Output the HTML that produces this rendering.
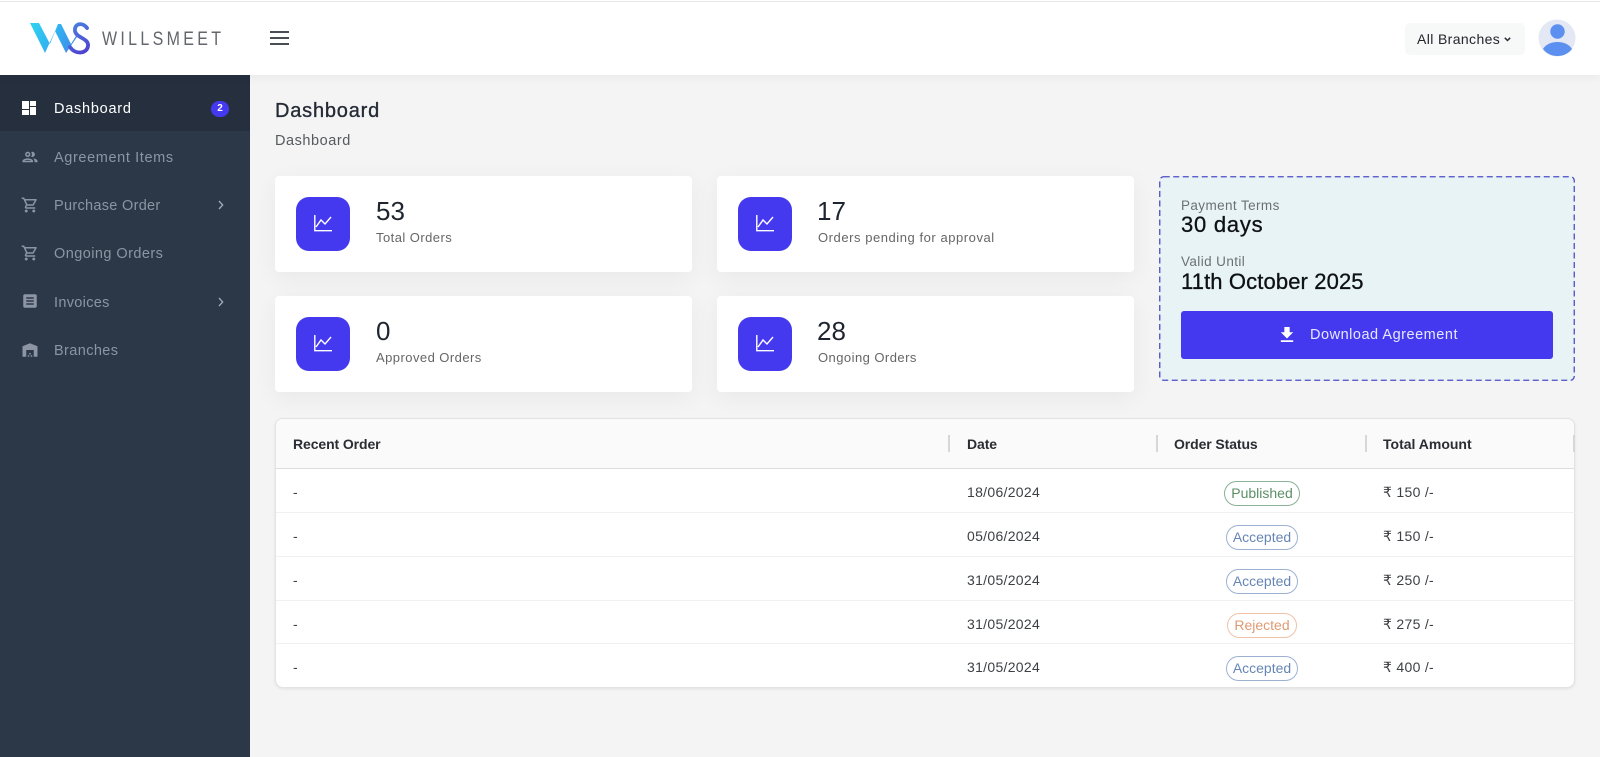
<!DOCTYPE html>
<html lang="en">
<head>
<meta charset="utf-8">
<title>Dashboard</title>
<style>
html,body{margin:0;padding:0;width:1600px;height:757px;overflow:hidden;background:#f4f4f4;font-family:"Liberation Sans",sans-serif}
.a{position:absolute}
.t{position:absolute;white-space:nowrap;height:24px;line-height:24px}
.card{position:absolute;width:417px;height:96px;background:#fff;border-radius:4px;box-shadow:0 6px 24px rgba(0,0,0,.05)}
.ico{position:absolute;left:21px;top:21px;width:54px;height:54px;border-radius:13px;background:#4539f0}
.ico svg{position:absolute;left:18px;top:18px}
.num{font-size:26px;color:#1f2530;left:101px;top:23px}
.lbl{font-size:13px;letter-spacing:.45px;color:#666;left:101px;top:50px}
.nav{font-size:14.5px;color:#8b95a3;left:54px}
.nv{position:absolute;left:21px;width:18px;height:18px;fill:#8b95a3}
.th{font-size:14px;font-weight:bold;color:#2a2d33;letter-spacing:-.1px}
.td{font-size:14px;color:#3c3f44;letter-spacing:.3px}
.sep{position:absolute;width:2px;height:17px;top:435px;background:#d5d7d9}
.row{position:absolute;left:276px;width:1299px;height:1px;background:#f0f0f0}
.pill{position:absolute;height:23px;line-height:23px;border:1px solid;border-radius:13px;text-align:center;font-size:14px;box-sizing:content-box;background:#fff}
</style>
</head>
<body>
<div class="a" style="left:0;top:0;width:1600px;height:75px;background:#fff;box-shadow:0 2px 10px rgba(0,0,0,.05);z-index:2"></div>
<div class="a" style="left:0;top:1px;width:1600px;height:1px;background:#e8e8e8;z-index:3"></div>

<div style="position:absolute;left:0;top:0;z-index:4">
<svg class="a" style="left:28px;top:20px" width="66" height="38" viewBox="28 20 66 38">
<defs>
<linearGradient id="g1" x1="30" y1="25" x2="80" y2="50" gradientUnits="userSpaceOnUse"><stop offset="0" stop-color="#2fd3f0"/><stop offset=".6" stop-color="#33a8f0"/><stop offset="1" stop-color="#4b7be6"/></linearGradient>
<linearGradient id="g2" x1="72" y1="25" x2="88" y2="52" gradientUnits="userSpaceOnUse"><stop offset="0" stop-color="#4a7fe0"/><stop offset="1" stop-color="#4f3fd0"/></linearGradient>
</defs>
<path fill="url(#g1)" d="M30 23 L39 23 L50 44 L58 24 L61 24 L71 44 L76 36 L77 37 L66 53 L55 31 L45 53 Z"/>
<path fill="none" stroke="url(#g2)" stroke-width="3.800" stroke-linecap="round" d="M87 28 C83 22 74 23 75 31 C76 38 89 38 88 46 C87 54 75 55 70 47"/>
</svg>
</div>
<div class="t" style="left:102px;top:27px;font-size:19.5px;letter-spacing:4.05px;color:#63666b;z-index:4;transform:scaleX(.82);transform-origin:left">WILLSMEET</div>

<svg class="a" style="left:270px;top:30px;z-index:4" width="19" height="16"><path d="M0 2h19M0 8h19M0 14h19" stroke="#4a4d52" stroke-width="1.900"/></svg>

<div class="a" style="left:1405px;top:23px;width:120px;height:32px;background:#f7f8f8;border-radius:5px;z-index:4"></div>
<div class="t" style="left:1417px;top:27px;font-size:14px;letter-spacing:.38px;color:#23262b;z-index:5">All Branches</div>
<svg class="a" style="left:1504px;top:37px;z-index:5" width="7" height="5"><path d="M.8 .8l2.700 2.700 2.700-2.700" fill="none" stroke="#2a2d33" stroke-width="1.500"/></svg>
<svg class="a" style="left:1538px;top:19px;z-index:5" width="38" height="38" viewBox="0 0 38 38">
<circle cx="19" cy="19" r="18.500" fill="#e3e8f4"/><circle cx="19.500" cy="12.500" r="7.200" fill="#5b8ff0"/><path d="M5 30 C8 25 14 23 19.500 23 C25 23 31 25 34 30 C30 35 25 37 19.500 37 C14 37 9 35 5 30Z" fill="#5b8ff0"/>
</svg>

<div class="a" style="left:0;top:75px;width:250px;height:682px;background:#2c3748"></div>
<div class="a" style="left:0;top:75px;width:250px;height:56px;background:#252f3e"></div>

<svg class="nv" style="left:22px;top:101px;width:14px;height:14px;fill:#fff" viewBox="0 0 14 14"><path d="M0 0h7v8H0zM8 0h6v5H8zM8 6h6v8H8zM0 9h7v5H0z"/></svg>
<div class="t nav" style="top:97px;color:#fff;letter-spacing:.75px">Dashboard</div>
<div class="a" style="left:211px;top:101px;width:18px;height:16px;border-radius:9px;background:#4539f0;color:#fff;font-size:10px;font-weight:bold;text-align:center;line-height:16px">2</div>

<svg class="nv" style="top:148px" viewBox="0 0 24 24"><path d="M9 13.750c-2.340 0-7 1.170-7 3.500V19h14v-1.750c0-2.330-4.660-3.500-7-3.500zM4.340 17c.84-.58 2.870-1.250 4.660-1.250s3.820.67 4.660 1.250H4.340zM9 12c1.930 0 3.500-1.570 3.500-3.500S10.930 5 9 5 5.500 6.570 5.500 8.500 7.070 12 9 12zm0-5c.83 0 1.500.67 1.500 1.500S9.830 10 9 10s-1.500-.67-1.500-1.500S8.170 7 9 7zm7.040 6.810c1.160.84 1.960 1.960 1.960 3.440V19h4v-1.750c0-2.020-3.500-3.170-5.960-3.440zM15 12c1.930 0 3.500-1.570 3.500-3.500S16.930 5 15 5c-.54 0-1.040.13-1.500.35.63.89 1 1.980 1 3.150s-.37 2.260-1 3.150c.46.22.96.35 1.500.35z"/></svg>
<div class="t nav" style="top:146px;letter-spacing:.62px">Agreement Items</div>

<svg class="nv" style="top:196px" viewBox="0 0 24 24"><path d="M15.550 13c.75 0 1.410-.41 1.750-1.030l3.580-6.490A.996.996 0 0 0 20.010 4H5.210l-.94-2H1v2h2l3.600 7.590-1.350 2.440C4.520 15.370 5.480 17 7 17h12v-2H7l1.100-2h7.450zM6.160 6h12.150l-2.760 5H8.530L6.160 6zM7 18c-1.100 0-1.990.9-1.990 2S5.900 22 7 22s2-.9 2-2-.9-2-2-2zm10 0c-1.100 0-1.990.9-1.990 2s.89 2 1.990 2 2-.9 2-2-.9-2-2-2z"/></svg>
<div class="t nav" style="top:194px;letter-spacing:.3px">Purchase Order</div>
<svg class="a" style="left:218px;top:200px" width="6" height="10"><path d="M1 1l3.700 4-3.700 4" fill="none" stroke="#a3abb6" stroke-width="1.300"/></svg>

<svg class="nv" style="top:244px" viewBox="0 0 24 24"><path d="M15.550 13c.75 0 1.410-.41 1.750-1.030l3.580-6.490A.996.996 0 0 0 20.010 4H5.210l-.94-2H1v2h2l3.600 7.590-1.350 2.440C4.520 15.370 5.480 17 7 17h12v-2H7l1.100-2h7.450zM6.160 6h12.150l-2.760 5H8.530L6.160 6zM7 18c-1.100 0-1.990.9-1.990 2S5.900 22 7 22s2-.9 2-2-.9-2-2-2zm10 0c-1.100 0-1.990.9-1.990 2s.89 2 1.990 2 2-.9 2-2-.9-2-2-2z"/></svg>
<div class="t nav" style="top:242px;letter-spacing:.44px">Ongoing Orders</div>

<svg class="nv" style="top:292px" viewBox="0 0 24 24"><path d="M19 3H5c-1.100 0-2 .9-2 2v14c0 1.100.9 2 2 2h14c1.100 0 2-.9 2-2V5c0-1.100-.9-2-2-2zm-2 14H7v-2h10v2zm0-4H7v-2h10v2zm0-4H7V7h10v2z"/></svg>
<div class="t nav" style="top:291px;letter-spacing:.32px">Invoices</div>
<svg class="a" style="left:218px;top:297px" width="6" height="10"><path d="M1 1l3.700 4-3.700 4" fill="none" stroke="#a3abb6" stroke-width="1.300"/></svg>

<svg class="nv" style="top:341px" viewBox="0 0 24 24"><path d="M22 21V7L12 3 2 7v14h5v-9h10v9h5zm-11-2H9v2h2v-2zm2-3h-2v2h2v-2zm2 3h-2v2h2v-2z"/></svg>
<div class="t nav" style="top:339px;letter-spacing:.39px">Branches</div>

<div class="t" style="left:275px;top:99px;font-size:20px;letter-spacing:.8px;color:#252b36;-webkit-text-stroke:.35px #252b36">Dashboard</div>
<div class="t" style="left:275px;top:129px;font-size:14.500px;letter-spacing:.55px;color:#555a60">Dashboard</div>

<div class="card" style="left:275px;top:176px"><div class="ico"><svg width="18" height="17" viewBox="0 0 18 17"><path d="M.8 0V15.700H18M2 12L7 5l4 4 6-7" fill="none" stroke="#fff" stroke-width="1.400"/></svg></div><div class="t num">53</div><div class="t lbl">Total Orders</div></div>
<div class="card" style="left:717px;top:176px"><div class="ico"><svg width="18" height="17" viewBox="0 0 18 17"><path d="M.8 0V15.700H18M2 12L7 5l4 4 6-7" fill="none" stroke="#fff" stroke-width="1.400"/></svg></div><div class="t num" style="left:100px">17</div><div class="t lbl" style="letter-spacing:.55px">Orders pending for approval</div></div>
<div class="card" style="left:275px;top:296px"><div class="ico"><svg width="18" height="17" viewBox="0 0 18 17"><path d="M.8 0V15.700H18M2 12L7 5l4 4 6-7" fill="none" stroke="#fff" stroke-width="1.400"/></svg></div><div class="t num">0</div><div class="t lbl">Approved Orders</div></div>
<div class="card" style="left:717px;top:296px"><div class="ico"><svg width="18" height="17" viewBox="0 0 18 17"><path d="M.8 0V15.700H18M2 12L7 5l4 4 6-7" fill="none" stroke="#fff" stroke-width="1.400"/></svg></div><div class="t num" style="left:100px">28</div><div class="t lbl">Ongoing Orders</div></div>

<div class="a" style="left:1159px;top:176px;width:416px;height:205px;background:#e8f3f5;border-radius:4px"></div>
<svg class="a" style="left:1159px;top:176px" width="416" height="205"><rect x=".75" y=".75" width="414.500" height="203.500" rx="4" fill="none" stroke="#4f4bc4" stroke-width="1.300" stroke-dasharray="6 3.500"/></svg>
<div class="t" style="left:1181px;top:194px;font-size:13.500px;letter-spacing:.4px;color:#6b7074">Payment Terms</div>
<div class="t" style="left:1181px;top:213px;font-size:22px;letter-spacing:.77px;color:#0e1114;-webkit-text-stroke:.3px #0e1114">30 days</div>
<div class="t" style="left:1181px;top:250px;font-size:13.500px;letter-spacing:.4px;color:#6b7074">Valid Until</div>
<div class="t" style="left:1181px;top:270px;font-size:22px;letter-spacing:.12px;color:#0e1114;-webkit-text-stroke:.3px #0e1114">11th October 2025</div>
<div class="a" style="left:1181px;top:311px;width:372px;height:48px;background:#4539f0;border-radius:3px"></div>
<svg class="a" style="left:1280px;top:327px" width="14" height="15" viewBox="5 3 14 17"><path d="M5 20h14v-2H5v2zM19 9h-4V3H9v6H5l7 7 7-7z" fill="#fff"/></svg>
<div class="t" style="left:1310px;top:323px;font-size:14.500px;letter-spacing:.52px;color:#e6e8ff">Download Agreement</div>

<div class="a" style="left:275px;top:418px;width:1300px;height:270px;box-sizing:border-box;background:#fff;border:1px solid #e2e3e4;border-radius:8px;box-shadow:0 1px 3px rgba(0,0,0,.08)"></div>
<div class="a" style="left:276px;top:419px;width:1298px;height:49px;background:#fafafa;border-radius:8px 8px 0 0;border-bottom:1px solid #dcdddf"></div>
<div class="t th" style="left:293px;top:432px">Recent Order</div>
<div class="t th" style="left:967px;top:432px">Date</div>
<div class="t th" style="left:1174px;top:432px">Order Status</div>
<div class="t th" style="left:1383px;top:432px;letter-spacing:0">Total Amount</div>
<div class="sep" style="left:948px"></div><div class="sep" style="left:1156px"></div><div class="sep" style="left:1365px"></div><div class="sep" style="left:1573px"></div>

<div class="row" style="top:512px"></div><div class="row" style="top:556px"></div><div class="row" style="top:600px"></div><div class="row" style="top:643px"></div>

<div class="t td" style="left:293px;top:480px">-</div><div class="t td" style="left:967px;top:480px">18/06/2024</div><div class="t td" style="left:1383px;top:480px">₹ 150 /-</div>
<div class="t td" style="left:293px;top:524px">-</div><div class="t td" style="left:967px;top:524px">05/06/2024</div><div class="t td" style="left:1383px;top:524px">₹ 150 /-</div>
<div class="t td" style="left:293px;top:568px">-</div><div class="t td" style="left:967px;top:568px">31/05/2024</div><div class="t td" style="left:1383px;top:568px">₹ 250 /-</div>
<div class="t td" style="left:293px;top:612px">-</div><div class="t td" style="left:967px;top:612px">31/05/2024</div><div class="t td" style="left:1383px;top:612px">₹ 275 /-</div>
<div class="t td" style="left:293px;top:655px">-</div><div class="t td" style="left:967px;top:655px">31/05/2024</div><div class="t td" style="left:1383px;top:655px">₹ 400 /-</div>

<div class="pill" style="left:1224px;top:481px;width:74px;color:#5a8f66;border-color:#8ab096">Published</div>
<div class="pill" style="left:1226px;top:525px;width:70px;color:#6685b6;border-color:#9db2d2">Accepted</div>
<div class="pill" style="left:1226px;top:569px;width:70px;color:#6685b6;border-color:#9db2d2">Accepted</div>
<div class="pill" style="left:1227px;top:613px;width:68px;color:#de9a72;border-color:#efc2a8">Rejected</div>
<div class="pill" style="left:1226px;top:656px;width:70px;color:#6685b6;border-color:#9db2d2">Accepted</div>
</body>
</html>
